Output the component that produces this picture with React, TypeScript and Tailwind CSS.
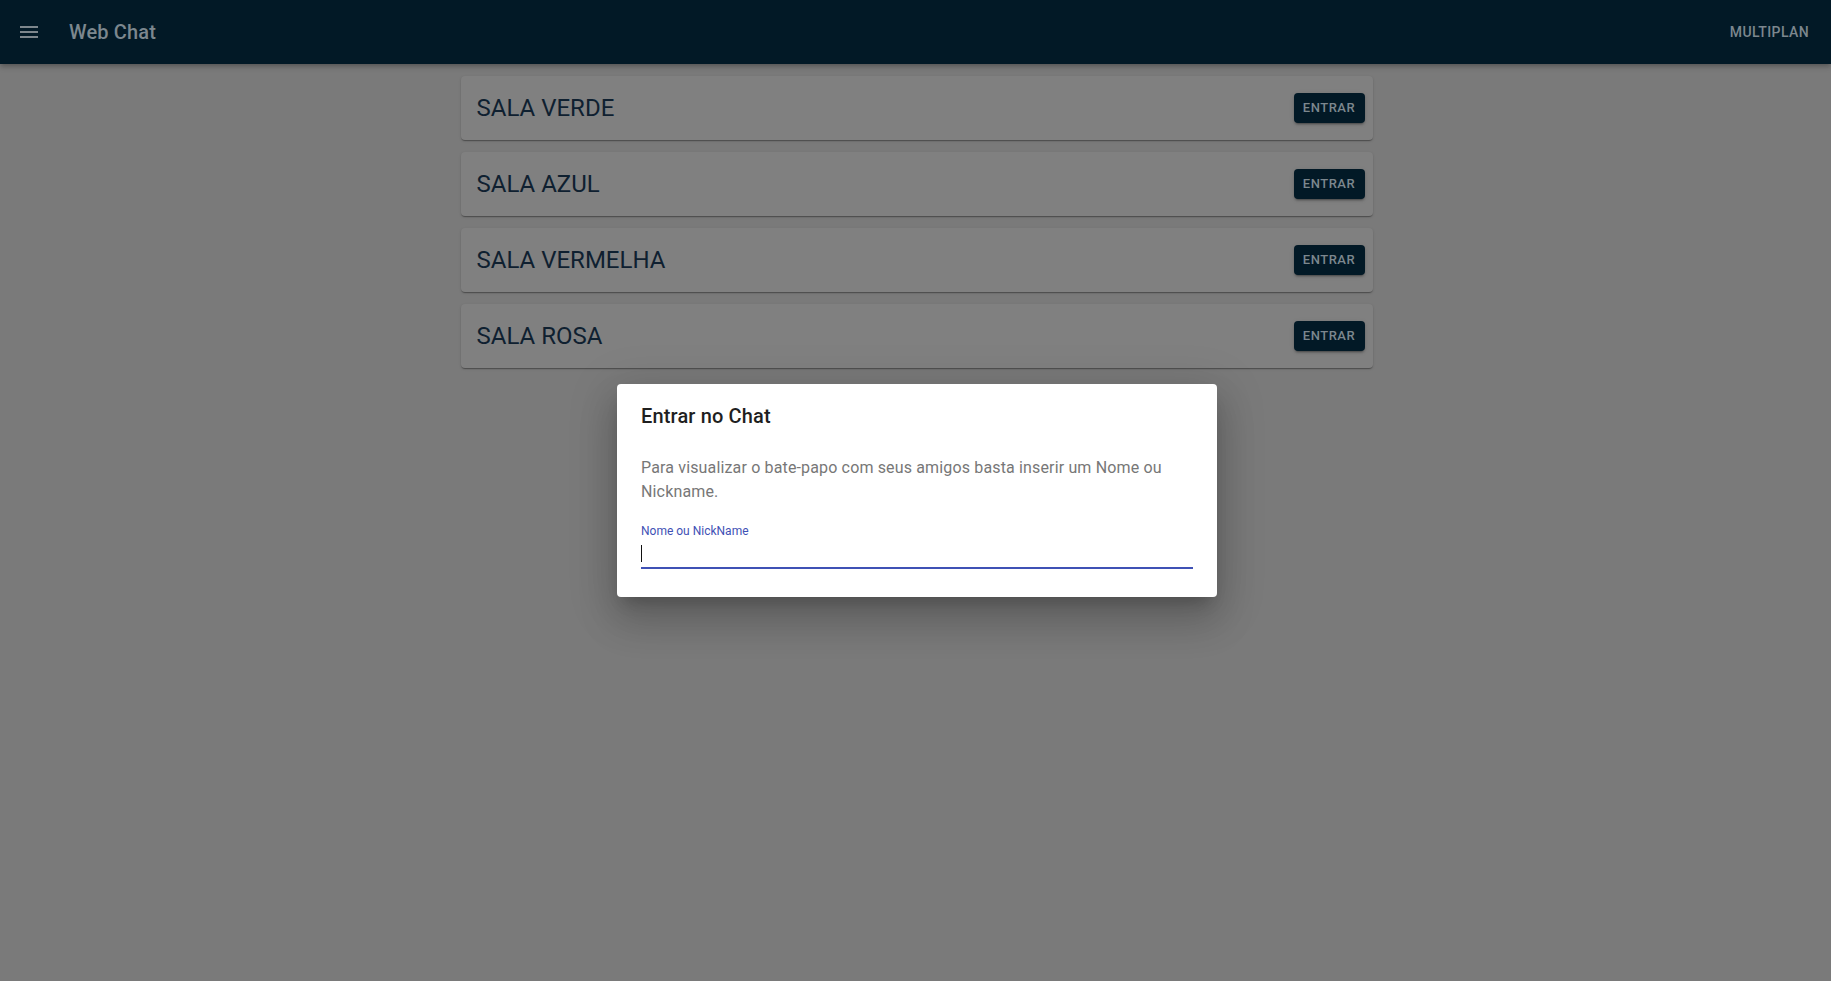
import React from "react";

const rooms = ["SALA VERDE", "SALA AZUL", "SALA VERMELHA", "SALA ROSA"];

export default function App() {
  return (
    <div
      className="relative min-h-[981px] w-full bg-[#7a7a7a]"
      style={{ fontFamily: "Roboto, 'Noto Sans', Arial, sans-serif" }}
    >
      <header className="flex h-[64px] items-center justify-between bg-[#021926] pl-[17px] pr-[22px] shadow-[0_2px_4px_-1px_rgba(0,0,0,0.2),0_4px_5px_0_rgba(0,0,0,0.14)]">
        <div className="flex items-center">
          <svg width="24" height="24" viewBox="0 0 24 24" className="fill-[#7d868c]">
            <path d="M3 18h18v-2H3v2zm0-5h18v-2H3v2zm0-7v2h18V6H3z" />
          </svg>
          <span className="ml-[28px] text-[20px] font-medium tracking-[0.0075em] text-[#7c878e]">
            Web Chat
          </span>
        </div>
        <span className="text-[14px] font-medium uppercase tracking-[0.02857em] text-[#7c878e]">
          MULTIPLAN
        </span>
      </header>

      <main className="mx-auto flex w-[960px] translate-x-[1px] flex-col gap-[12px] px-[24px] pt-[12px]">
        {rooms.map((r) => (
          <div
            key={r}
            className="flex h-[64px] items-center justify-between rounded-[4px] bg-[#808080] pl-[16px] pr-[8px] shadow-[0_2px_1px_-1px_rgba(0,0,0,0.2),0_1px_1px_0_rgba(0,0,0,0.14),0_1px_3px_0_rgba(0,0,0,0.12)]"
          >
            <span className="text-[24px] font-normal leading-none text-[#0f2030]">{r}</span>
            <button className="flex h-[30px] w-[71px] items-center justify-center rounded-[4px] bg-[#021926] text-[13px] font-medium uppercase tracking-[0.04em] text-[#7c878e] shadow-[0_3px_1px_-2px_rgba(0,0,0,0.2),0_2px_2px_0_rgba(0,0,0,0.14),0_1px_5px_0_rgba(0,0,0,0.12)]">
              ENTRAR
            </button>
          </div>
        ))}
      </main>

      <div className="absolute left-[617px] top-[384px] w-[600px] rounded-[4px] bg-white shadow-[0_11px_15px_-7px_rgba(0,0,0,0.2),0_24px_38px_3px_rgba(0,0,0,0.14),0_9px_46px_8px_rgba(0,0,0,0.12)]">
        <div className="px-[24px] py-[16px]">
          <h2 className="text-[20px] font-medium leading-[32px] tracking-[0.0075em] text-[#1f1f1f]">
            Entrar no Chat
          </h2>
        </div>
        <div className="px-[24px] pb-[20px] pt-[8px]">
          <p className="text-[16px] leading-[24px] tracking-[0.00938em] text-[#777777]">
            Para visualizar o bate-papo com seus amigos basta inserir um Nome ou Nickname.
          </p>
          <div className="mb-[8px] mt-[19px] flex flex-col">
            <label className="text-[12px] leading-[16px] text-[#3f51b5]">Nome ou NickName</label>
            <div className="relative flex h-[30px] items-center border-b-2 border-[#3f51b5]">
              <div className="h-[17px] w-px bg-[#111111]" />
            </div>
          </div>
        </div>
      </div>
    </div>
  );
}
